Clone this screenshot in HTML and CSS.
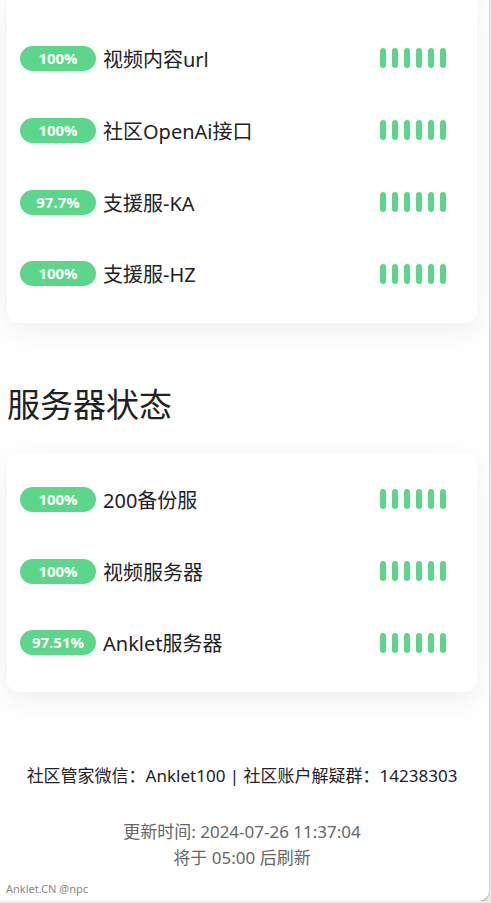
FILE: index.html
```html
<!DOCTYPE html>
<html lang="zh-CN">
<head>
    <meta charset="UTF-8">
    <meta name="viewport" content="width=device-width, initial-scale=1.0">
    <title>服务状态</title>
    <link rel="stylesheet" href="styles.css">
</head>
<body>
    <div class="page">

        <!-- 接口状态 -->
        <div class="card card-top">
            <div class="row">
                <span class="pill">100%</span>
                <span class="name">视频内容url</span>
                <span class="bars"><i></i><i></i><i></i><i></i><i></i><i></i></span>
            </div>
            <div class="row">
                <span class="pill">100%</span>
                <span class="name">社区OpenAi接口</span>
                <span class="bars"><i></i><i></i><i></i><i></i><i></i><i></i></span>
            </div>
            <div class="row">
                <span class="pill">97.7%</span>
                <span class="name">支援服-KA</span>
                <span class="bars"><i></i><i></i><i></i><i></i><i></i><i></i></span>
            </div>
            <div class="row">
                <span class="pill">100%</span>
                <span class="name">支援服-HZ</span>
                <span class="bars"><i></i><i></i><i></i><i></i><i></i><i></i></span>
            </div>
        </div>

        <h2 class="title">服务器状态</h2>

        <div class="card">
            <div class="row">
                <span class="pill">100%</span>
                <span class="name">200备份服</span>
                <span class="bars"><i></i><i></i><i></i><i></i><i></i><i></i></span>
            </div>
            <div class="row">
                <span class="pill">100%</span>
                <span class="name">视频服务器</span>
                <span class="bars"><i></i><i></i><i></i><i></i><i></i><i></i></span>
            </div>
            <div class="row">
                <span class="pill">97.51%</span>
                <span class="name">Anklet服务器</span>
                <span class="bars"><i></i><i></i><i></i><i></i><i></i><i></i></span>
            </div>
        </div>

        <p class="contact">社区管家微信：Anklet100 | 社区账户解疑群：14238303</p>

        <p class="update">更新时间: 2024-07-26 11:37:04<br>将于 05:00 后刷新</p>

        <p class="credit">Anklet.CN @npc</p>
    </div>
</body>
</html>
```

FILE: styles.css
```css
html {
    background-color: #ececec;
}
body {
    margin: 0;
    font-family: "Noto Sans", "Noto Sans CJK SC", sans-serif;
    color: #222;
}
.page {
    width: 489px;
    height: 913px;
    margin-top: -12px;
    padding: 0 12px 0 7px;
    box-sizing: border-box;
    background-color: #fff;
    border-bottom-right-radius: 10px;
    box-shadow: 0 1px 2px rgba(0, 0, 0, 0.35);
    overflow: hidden;
}
.card {
    background-color: #fff;
    border-radius: 12px;
    padding: 10px 31px 14px 13px;
    box-shadow: 0 8px 30px rgba(0, 0, 0, 0.07);
}
.card-top {
    padding-top: 34px;
}
.row {
    display: flex;
    align-items: center;
    height: 72px;
}
.row:last-child {
    height: 71px;
}
.pill {
    width: 76px;
    height: 25px;
    line-height: 25px;
    border-radius: 13px;
    background-color: #5bd68b;
    color: #fff;
    font-family: "Open Sans", sans-serif;
    font-weight: bold;
    font-size: 15px;
    text-align: center;
    flex-shrink: 0;
}
.name {
    margin-left: 7px;
    font-size: 20px;
    flex: 1;
}
.bars {
    display: flex;
    gap: 6px;
}
.bars i {
    display: block;
    width: 6px;
    height: 20px;
    border-radius: 3px;
    background-color: #5bd68b;
}
.title {
    margin: 63px 0 29px;
    font-size: 33px;
    line-height: 38px;
    font-weight: normal;
}
.contact {
    margin: 71px 0 0;
    font-size: 17px;
    line-height: 26px;
    text-align: center;
}
.update {
    margin: 30px 0 0;
    font-size: 17px;
    line-height: 26px;
    color: #666;
    text-align: center;
}
.credit {
    margin: 10px 0 0 -1px;
    font-size: 11px;
    line-height: 16px;
    color: #888;
}
```
